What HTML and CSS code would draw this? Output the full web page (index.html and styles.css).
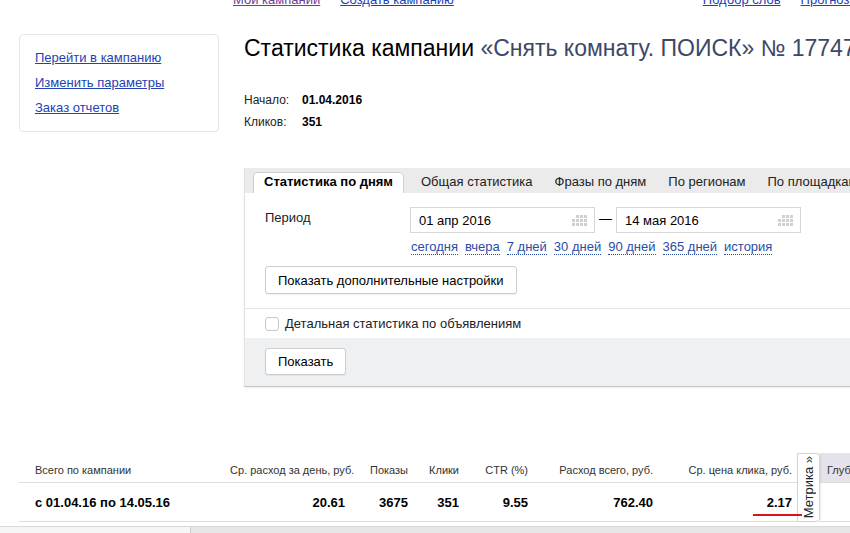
FILE: index.html
```html
<!DOCTYPE html>
<html>
<head>
  <meta charset="utf-8" />
  <title>Статистика кампании</title>
  <link rel="stylesheet" href="styles.css">
</head>
<body>
<div class="topnav">
  <div class="nav-group">
    <a class="visited" href="#">Мои кампании</a>
    <a href="#">Создать кампанию</a>
  </div>
  <div class="nav-group nav-right">
    <a href="#">Подбор слов</a>
    <a href="#">Прогноз бюджета</a>
  </div>
</div>

<div class="layout">
  <div class="sidebar">
    <a href="#">Перейти в кампанию</a>
    <a href="#">Изменить параметры</a>
    <a href="#">Заказ отчетов</a>
  </div>

  <div class="content">
    <h1 class="title">Статистика кампании <span class="camp-name">«Снять комнату. ПОИСК» № 17747283</span></h1>

    <div class="summary">
      <span class="summary-label">Начало:</span><b>01.04.2016</b>
      <span class="summary-label">Кликов:</span><b>351</b>
    </div>

    <div class="panel">
      <div class="tabs">
        <div class="tab tab-active">Статистика по дням</div>
        <div class="tab">Общая статистика</div>
        <div class="tab">Фразы по дням</div>
        <div class="tab">По регионам</div>
        <div class="tab">По площадкам</div>
      </div>

      <div class="panel-body">
        <div class="period-row">
          <div class="period-label">Период</div>
          <div class="date-input">
            <span>01 апр 2016</span>
            <svg class="cal-icon" width="15" height="11" viewBox="0 0 15 11">
              <rect x="4" y="0" width="3" height="3"/><rect x="8" y="0" width="3" height="3"/><rect x="12" y="0" width="3" height="3"/>
              <rect x="0" y="4" width="3" height="3"/><rect x="4" y="4" width="3" height="3"/><rect x="8" y="4" width="3" height="3"/><rect x="12" y="4" width="3" height="3"/>
              <rect x="0" y="8" width="3" height="3"/><rect x="4" y="8" width="3" height="3"/><rect x="8" y="8" width="3" height="3"/><rect x="12" y="8" width="3" height="3"/>
            </svg>
          </div>
          <span class="dash">—</span>
          <div class="date-input">
            <span>14 мая 2016</span>
            <svg class="cal-icon" width="15" height="11" viewBox="0 0 15 11">
              <rect x="4" y="0" width="3" height="3"/><rect x="8" y="0" width="3" height="3"/><rect x="12" y="0" width="3" height="3"/>
              <rect x="0" y="4" width="3" height="3"/><rect x="4" y="4" width="3" height="3"/><rect x="8" y="4" width="3" height="3"/><rect x="12" y="4" width="3" height="3"/>
              <rect x="0" y="8" width="3" height="3"/><rect x="4" y="8" width="3" height="3"/><rect x="8" y="8" width="3" height="3"/><rect x="12" y="8" width="3" height="3"/>
            </svg>
          </div>
        </div>

        <div class="quick-links">
          <span>сегодня</span>
          <span>вчера</span>
          <span>7 дней</span>
          <span>30 дней</span>
          <span>90 дней</span>
          <span>365 дней</span>
          <span>история</span>
        </div>

        <button class="btn btn-settings">Показать дополнительные настройки</button>
      </div>

      <label class="check-row">
        <span class="checkbox"></span>
        Детальная статистика по объявлениям
      </label>

      <div class="panel-footer">
        <button class="btn">Показать</button>
      </div>
    </div>
  </div>
</div>

<div class="stats">
  <div class="th th-first">Всего по кампании</div>
  <div class="th">Ср. расход за день, руб.</div>
  <div class="th">Показы</div>
  <div class="th">Клики</div>
  <div class="th">CTR (%)</div>
  <div class="th">Расход всего, руб.</div>
  <div class="th th-last">Ср. цена клика, руб.</div>
  <div class="metrika"><span>Метрика »</span></div>
  <div class="th th-extra">Глубина</div>

  <div class="td td-first">с 01.04.16 по 14.05.16</div>
  <div class="td">20.61</div>
  <div class="td">3675</div>
  <div class="td">351</div>
  <div class="td">9.55</div>
  <div class="td">762.40</div>
  <div class="td td-last">2.17<span class="mark"></span></div>
  <div class="td td-extra"></div>
</div>

<div class="hscroll">
  <div class="hscroll-thumb"></div>
</div>
</body>
</html>
```

FILE: styles.css
```css
body {
  margin: 0;
  width: 850px;
  height: 533px;
  overflow: hidden;
  background: #fff;
  font-family: "Liberation Sans", Arial, sans-serif;
  font-size: 13px;
  color: #000;
}
a {
  color: #2242b4;
}
a.visited {
  color: #6b3f96;
}

/* top navigation, cut by the window edge */
.topnav {
  display: flex;
  margin-top: -8px;
  padding-left: 233px;
  line-height: 16px;
  white-space: nowrap;
}
.nav-group {
  display: flex;
  gap: 20px;
}
.nav-right {
  margin-left: 249px;
}

.layout {
  display: flex;
  align-items: flex-start;
  margin-top: 26px;
  padding-left: 19px;
}
.sidebar {
  width: 200px;
  box-sizing: border-box;
  border: 1px solid #e6e6e6;
  border-radius: 4px;
  padding: 15px;
  display: flex;
  flex-direction: column;
  gap: 9px;
  line-height: 16px;
  flex-shrink: 0;
}
.content {
  margin-left: 25px;
  flex: 1;
  min-width: 0;
}
.title {
  margin: 1px 0 0;
  font-size: 23px;
  line-height: 26px;
  font-weight: normal;
  white-space: nowrap;
}
.camp-name {
  color: #3c4866;
}
.summary {
  margin-top: 28px;
  display: grid;
  grid-template-columns: 58px auto;
  font-size: 12px;
  line-height: 22px;
}
.summary-label {
  color: #222;
}

/* tabbed panel */
.panel {
  margin-top: 35px;
  width: 680px;
  border-left: 1px solid #e2e2e2;
  border-bottom: 1px solid #c4c4c4;
  box-shadow: 0 1px 2px rgba(0,0,0,0.08);
}
.tabs {
  display: flex;
  background: #ebebeb;
  padding: 4px 0 0 8px;
  white-space: nowrap;
}
.tab {
  padding: 0 10px 2px;
  line-height: 18px;
  border: 1px solid transparent;
  border-bottom: none;
  color: #222;
}
.tab-active {
  margin-right: 6px;
  background: #fff;
  border-color: #cfcfcf;
  border-radius: 5px 5px 0 0;
  font-weight: bold;
  color: #000;
}
.panel-body {
  padding: 14px 20px;
}
.period-row {
  display: flex;
  align-items: flex-start;
}
.period-label {
  width: 145px;
  line-height: 22px;
  color: #222;
}
.date-input {
  width: 185px;
  height: 26px;
  box-sizing: border-box;
  border: 1px solid #d6d6d6;
  padding: 0 7px 0 8px;
  display: flex;
  align-items: center;
  justify-content: space-between;
  font-size: 13px;
}
.cal-icon {
  fill: #d0d0d0;
}
.dash {
  width: 21px;
  text-align: center;
  line-height: 24px;
}
.quick-links {
  display: flex;
  gap: 7px;
  margin: 7px 0 0 146px;
  font-size: 13px;
  line-height: 14px;
  color: #2a4ca6;
}
.quick-links span {
  border-bottom: 1px dotted #2a4ca6;
}
.btn {
  height: 28px;
  padding: 0 12px;
  border: 1px solid #cdcdcd;
  border-radius: 3px;
  background: #fff;
  box-shadow: 0 1px 1px rgba(0,0,0,0.06);
  font-family: inherit;
  font-size: 13px;
  color: #000;
}
.btn-settings {
  margin-top: 11px;
  display: block;
}
.check-row {
  display: flex;
  align-items: center;
  gap: 6px;
  border-top: 1px solid #e6e6e6;
  padding: 0 20px;
  height: 29px;
  color: #222;
}
.checkbox {
  width: 12px;
  height: 12px;
  border: 1px solid #c8c8c8;
  border-radius: 3px;
  background: #fff;
}
.panel-footer {
  background: #eff0f1;
  padding: 10px 20px 11px;
}
.panel-footer .btn {
  height: 27px;
}

/* totals table */
.stats {
  margin: 66px 0 0 19px;
  display: grid;
  grid-template-columns: 211px 125px 63px 51px 69px 125px 134px 23px 100px;
}
.th, .td {
  text-align: right;
  padding-right: 10px;
  white-space: nowrap;
}
.th {
  font-size: 11px;
  line-height: 14px;
  color: #333;
  padding-top: 10px;
  padding-bottom: 5px;
  border-bottom: 1px solid #dcdcdc;
}
.td {
  position: relative;
  font-weight: bold;
  line-height: 15px;
  padding-top: 12px;
  padding-bottom: 11px;
  border-bottom: 1px solid #dcdcdc;
}
.th-first, .td-first {
  text-align: left;
  padding-left: 16px;
}
.th-last, .td-last {
  padding-right: 5px;
}
.th-extra, .td-extra {
  text-align: left;
  padding-left: 7px;
}
.th-extra {
  background: #e5e2eb;
}
.metrika {
  grid-column: 8;
  grid-row: 1 / 3;
  border: 1px solid #d4d4d4;
  border-radius: 0 4px 4px 0;
  background: #fff;
  box-shadow: 1px 0 2px rgba(0,0,0,0.08);
  display: flex;
  align-items: center;
  justify-content: center;
  z-index: 2;
}
.metrika span {
  writing-mode: vertical-rl;
  transform: rotate(180deg);
  font-size: 13px;
  color: #222;
}
/* red hand-drawn underline under the price */
.mark {
  position: absolute;
  left: 90px;
  top: 31px;
  width: 49px;
  height: 2px;
  background: #d8141a;
  z-index: 3;
}

.hscroll {
  margin-top: 4px;
  height: 7px;
  background: #e6e6e6;
  border-top: 1px solid #d8d8d8;
}
.hscroll-thumb {
  width: 190px;
  height: 100%;
  background: #f6f6f6;
  border-right: 1px solid #cfcfcf;
}
```
